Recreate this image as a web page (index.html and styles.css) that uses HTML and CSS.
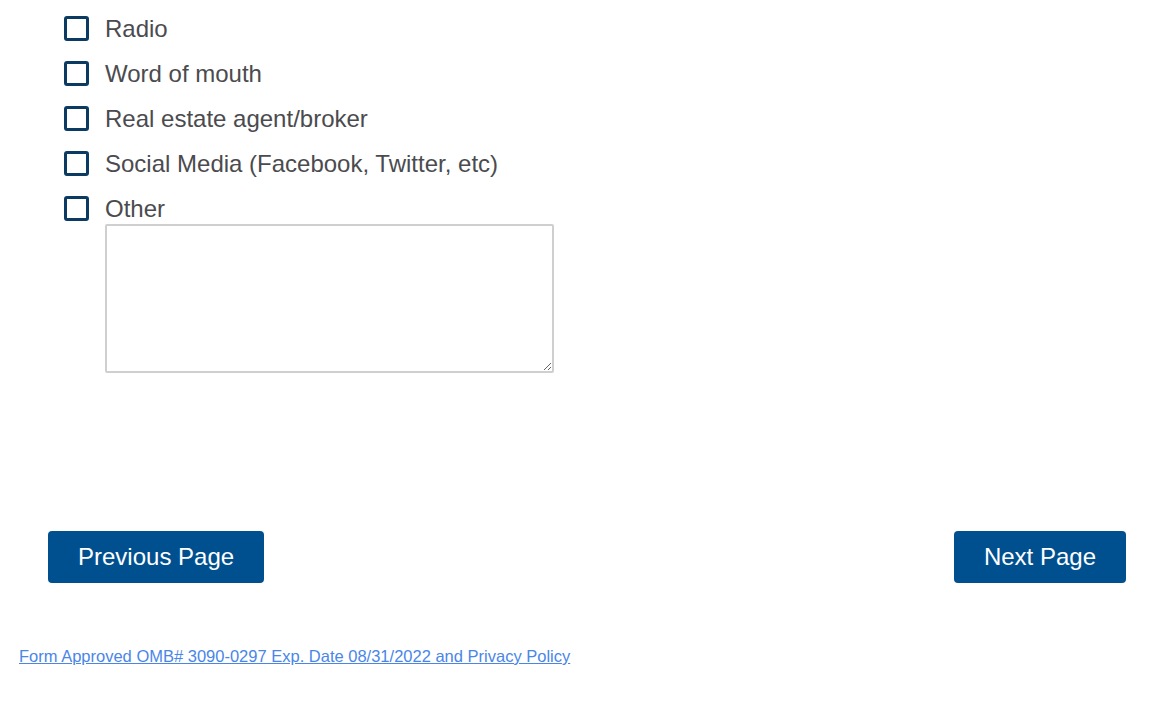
FILE: index.html
```html
<!DOCTYPE html>
<html>
<head>
<meta charset="utf-8">
<link rel="stylesheet" href="styles.css">
</head>
<body>
<div class="page">
  <ul class="options">
    <li class="option"><span class="box"></span><span class="label">Radio</span></li>
    <li class="option"><span class="box"></span><span class="label">Word of mouth</span></li>
    <li class="option"><span class="box"></span><span class="label">Real estate agent/broker</span></li>
    <li class="option"><span class="box"></span><span class="label">Social Media (Facebook, Twitter, etc)</span></li>
    <li class="option"><span class="box"></span><span class="label">Other</span></li>
  </ul>
  <div class="other-wrap"><textarea class="other-text"></textarea></div>
  <div class="nav">
    <button class="btn">Previous Page</button>
    <button class="btn">Next Page</button>
  </div>
  <footer class="footer"><a href="#" class="footer-link">Form Approved OMB# 3090-0297 Exp. Date 08/31/2022 and Privacy Policy</a></footer>
</div>
</body>
</html>
```
FILE: styles.css
```css
html, body {
  margin: 0;
  padding: 0;
  background: #fff;
}
.page {
  font-family: "Liberation Sans", Arial, sans-serif;
  width: 1153px;
}
.options {
  list-style: none;
  margin: 0;
  padding: 6px 0 0 64px;
}
.option {
  display: flex;
  align-items: center;
  height: 45px;
}
.box {
  box-sizing: border-box;
  width: 25px;
  height: 25px;
  border: 3px solid #0b3a63;
  border-radius: 3px;
  margin-right: 16px;
}
.label {
  font-size: 24px;
  color: #4b4b4f;
}
.other-wrap {
  padding-left: 105px;
  margin-top: -7px;
}
.other-text {
  display: block;
  box-sizing: border-box;
  width: 449px;
  height: 149px;
  border: 2px solid #cfcfd2;
  border-radius: 2px;
  margin: 0;
  resize: both;
}
.nav {
  display: flex;
  justify-content: space-between;
  padding: 158px 27px 0 48px;
}
.btn {
  background: #00508f;
  color: #fff;
  border: none;
  border-radius: 4px;
  height: 52px;
  padding: 0 30px;
  font-family: "Liberation Sans", Arial, sans-serif;
  font-size: 24px;
}
.footer {
  padding: 64px 0 0 19px;
  font-size: 16.5px;
}
.footer-link {
  color: #4a86e8;
}
```
